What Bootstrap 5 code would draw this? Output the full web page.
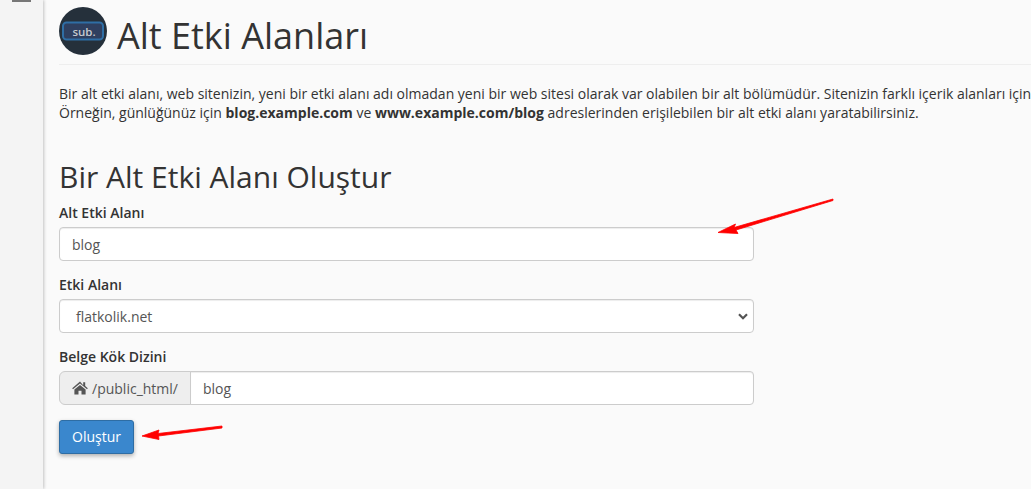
<!DOCTYPE html>
<html lang="tr">
<head>
<meta charset="utf-8">
<title>Alt Etki Alanları</title>
<link rel="stylesheet" href="https://cdn.jsdelivr.net/npm/bootstrap@5.3.0/dist/css/bootstrap.min.css">
<style>
html,body{height:489px;overflow:hidden}
body{font-family:"Open Sans",sans-serif;font-size:14px;color:#333;background:#fafafa;position:relative}
.shell{height:489px}
.rail{width:43px;background:#f4f4f4;box-shadow:1px 0 3px rgba(0,0,0,.22);flex:none;z-index:1}
.rail-bar{width:19px;height:2px;background:#777;margin-left:12px}
.pane{padding:7px 0 0 16px;min-width:0;flex:1;overflow:hidden}
.head-row{width:1100px;height:58px;border-bottom:1px solid #eee;gap:10px}
.head-row svg{flex:none}
.head-title{font-size:36px;font-weight:400;line-height:1;margin:11px 0 0;color:#333}
.intro{margin:19px 0 0;line-height:19px;white-space:nowrap;color:#333}
.sec-title{font-size:30px;font-weight:400;line-height:33px;margin:38px 0 0;color:#333}
.form-zone{width:695px}
.fld{margin-bottom:14px}
.fld-label{display:block;font-weight:600;font-size:14px;line-height:20px;margin:0 0 4px;color:#333}
.first-fld{margin-top:10px}
.form-control.ctl,.form-select.ctl{height:34px;font-size:14px;color:#555;border:1px solid #ccc;border-radius:4px;padding:6px 12px;box-shadow:inset 0 1px 1px rgba(0,0,0,.075)}
.form-select.ctl{padding-left:12px;text-indent:4px;background-image:url("data:image/svg+xml,%3Csvg xmlns='http://www.w3.org/2000/svg' viewBox='0 0 10 7'%3E%3Cpath d='M1 1.2 5 5.2 9 1.2' fill='none' stroke='%23555' stroke-width='2.2'/%3E%3C/svg%3E");background-position:right 5px center;background-size:10px 7px}
.addon{background:#eee;border:1px solid #ccc;color:#555;font-size:14px;padding:6px 12px;gap:4px;height:34px}
.go-btn{margin-top:1px;background:#3a87cd;border:1px solid #2e6da4;color:#fff;font-size:14px;padding:6px 12px;height:34px;border-radius:3px;box-shadow:0 2px 4px rgba(0,0,0,.3);line-height:20px}
.go-btn:hover{background:#3a87cd;color:#fff}
.arrows{position:absolute;left:0;top:0;pointer-events:none;z-index:3}
</style>
</head>
<body>
<div class="d-flex shell">
  <div class="rail"><div class="rail-bar"></div></div>
  <main class="pane">
    <div class="d-flex align-items-start head-row">
      <svg width="48" height="48" viewBox="0 0 48 48" aria-hidden="true">
        <circle cx="24" cy="24" r="24" fill="#25303b"/>
        <rect x="4" y="15.500" width="40" height="17" rx="3.500" fill="#2f3f5f" stroke="#2f6ea5" stroke-width="2"/>
        <text x="25" y="28.500" text-anchor="middle" font-family="Open Sans" font-size="11.500" font-weight="600" fill="#c5c9cf">sub.</text>
      </svg>
      <h1 class="head-title">Alt Etki Alanları</h1>
    </div>
    <p class="intro">Bir alt etki alanı, web sitenizin, yeni bir etki alanı adı olmadan yeni bir web sitesi olarak var olabilen bir alt bölümüdür. Sitenizin farklı içerik alanları için<br>Örneğin, günlüğünüz için <b>blog.example.com</b> ve <b>www.example.com/blog</b> adreslerinden erişilebilen bir alt etki alanı yaratabilirsiniz.</p>
    <h2 class="sec-title">Bir Alt Etki Alanı Oluştur</h2>
    <form class="form-zone">
      <div class="fld first-fld">
        <label class="fld-label" for="sub">Alt Etki Alanı</label>
        <input id="sub" class="form-control ctl" type="text" value="blog">
      </div>
      <div class="fld">
        <label class="fld-label" for="dom">Etki Alanı</label>
        <select id="dom" class="form-select ctl"><option>flatkolik.net</option></select>
      </div>
      <div class="fld">
        <label class="fld-label" for="root">Belge Kök Dizini</label>
        <div class="input-group">
          <span class="input-group-text addon">
            <svg width="16" height="14" viewBox="0 0 16 14" aria-hidden="true"><path fill="#555" d="M8 0.6 0.2 7.2l.8 1L8 2.4l7 5.8.8-1-2.6-2.2V1.2h-2v3.1zM2.4 8.6V13.6h4.1V9.8h3V13.6h4.1V8.6L8 3.9z"/></svg>
            /public_html/
          </span>
          <input id="root" class="form-control ctl" type="text" value="blog">
        </div>
      </div>
      <button type="button" class="btn go-btn">Oluştur</button>
    </form>
  </main>
</div>
<svg class="arrows" width="1031" height="489" aria-hidden="true">
  <path d="M833 199 734 227.500 L735.500 224 718 232.500 738 233.500 736 230 833 200.500z" fill="#f00" stroke="#f00" stroke-width=".8"/>
  <path d="M222 426 158 433.500 L159 430 142 436 159 439.500 158.500 436 222 428z" fill="#f00" stroke="#f00" stroke-width=".8"/>
</svg>
</body>
</html>
